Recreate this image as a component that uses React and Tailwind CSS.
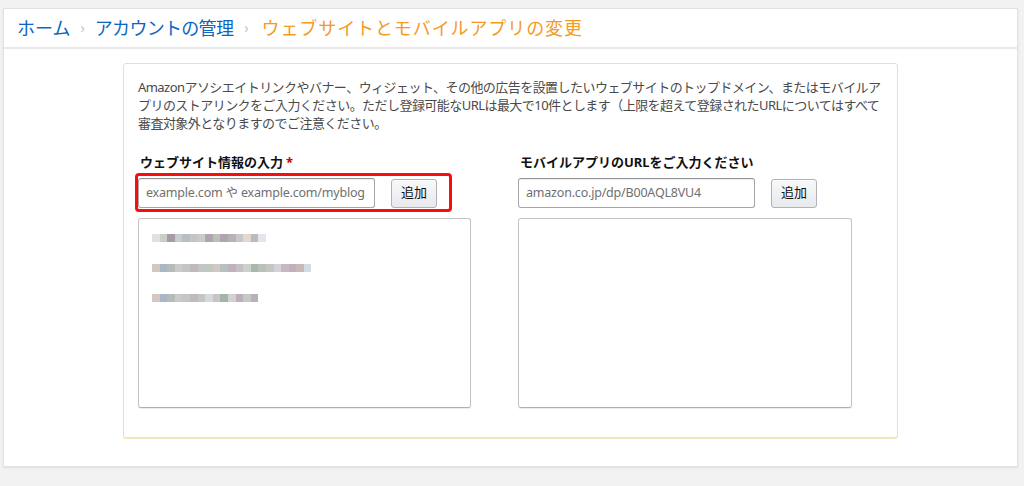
import React from 'react';

const jp = { fontFamily: '"Noto Sans", "Noto Sans CJK JP", sans-serif' };

const blurRows = [
  ['#dfe3df', '#c7cfc7', '#a89aa8', '#c8cbd0', '#b5c0c0', '#c3c6c3', '#c9cdca', '#b2a3b2', '#b9c2b9', '#aea5ae', '#b8b2b8', '#c7c9c7', '#e6d6cc', '#b8bcc0', '#e2e6ea'],
  ['#d4c6c0', '#a9b6c4', '#b5bdb8', '#c8cbc8', '#c3c6c3', '#c2b8be', '#c3c7c3', '#c6c6c0', '#d2c8c4', '#b9c0c2', '#bfb2bc', '#c4c0c4', '#cdd0cd', '#aab8ac', '#b8c2b8', '#c4c7c4', '#d2d2dc', '#c6b8c0', '#c0b0b8', '#c9b8b8', '#d2dce2'],
  ['#d4c6c0', '#a9b6c4', '#b5bdb8', '#c8cbc8', '#c3c6c3', '#c2b8be', '#c3c7c3', '#d8d8d8', '#c6c6c6', '#a2b4a6', '#d2d2d2', '#bcb0bc', '#c5c8c5', '#b8b0c0'],
];

function BlurLine({ colors }) {
  return (
    <div className="flex h-[8px] blur-[0.5px]">
      {colors.map((c, i) => (
        <div key={i} className="h-full w-[7.6px]" style={{ backgroundColor: c }} />
      ))}
    </div>
  );
}

function AddButton() {
  return (
    <button className="ml-[16px] h-[29px] w-[46px] rounded-[3px] border border-[#adb1b8] bg-gradient-to-b from-[#f7f8fa] to-[#e7e9ec] text-[13px] text-[#111] shadow-[0_1px_0_rgba(255,255,255,0.6)_inset]">
      追加
    </button>
  );
}

function UrlInput({ placeholder }) {
  return (
    <div className="flex h-[30px] w-[237px] items-center overflow-hidden whitespace-nowrap rounded-[3px] border border-[#a6a6a6] border-t-[#949494] bg-white px-[7px] text-[12.5px] tracking-[-0.2px] text-[#6f6f6f] shadow-[0_1px_0_rgba(0,0,0,0.07)_inset]">
      {placeholder}
    </div>
  );
}

export default function App() {
  return (
    <div className="min-h-[486px] bg-[#f2f2f2] pt-[8px] pl-[3px] pr-[6px]" style={jp}>
      <div className="h-[459px] border border-[#e2e2e2] bg-white shadow-[0_1px_2px_rgba(0,0,0,0.08)]">
        <div className="flex h-[40px] items-center border-b-2 border-[#e9e9e9] pl-[13px] text-[18px] leading-none">
          <span className="text-[#0b66c0]">ホーム</span>
          <span className="mx-[10px] text-[14px] text-[#c2c2c2]">›</span>
          <span className="tracking-[-0.7px] text-[#0b66c0]">アカウントの管理</span>
          <span className="ml-[11px] mr-[13px] text-[14px] text-[#c2c2c2]">›</span>
          <span className="tracking-[0.9px] text-[#f39b1f]">ウェブサイトとモバイルアプリの変更</span>
        </div>

        <div className="pt-[14px] pl-[119px]">
          <div className="relative h-[375px] w-[775px] rounded-[3px] border border-[#f8dcaa] pt-[14px] pl-[14px] shadow-[0_1px_0_#fbe6c2]">
            <p className="whitespace-nowrap text-[13px] leading-[18px] tracking-[-0.55px] text-[#4a4a4a]">
              Amazonアソシエイトリンクやバナー、ウィジェット、その他の広告を設置したいウェブサイトのトップドメイン、またはモバイルア
              <br />
              プリのストアリンクをご入力ください。ただし登録可能なURLは最大で10件とします（上限を超えて登録されたURLについてはすべて
              <br />
              審査対象外となりますのでご注意ください。
            </p>

            <div className="mt-[21px] flex gap-[47px]">
              <div className="w-[333px]">
                <div className="h-[18px] pl-[2px] text-[13px] font-bold leading-[18px] text-[#111]">
                  ウェブサイト情報の入力<span className="ml-[3px] text-[#c40000]">*</span>
                </div>
                <div className="relative mt-[7px] flex items-center">
                  <UrlInput placeholder="example.com や example.com/myblog" />
                  <AddButton />
                  <div className="pointer-events-none absolute left-[-3px] top-[-5px] h-[39px] w-[317px] rounded-[4px] border-[3px] border-[#f60d0d]" />
                </div>
                <div className="mt-[10px] h-[190px] rounded-[3px] border border-[#c4c4c4] border-b-[#b0b0b0] pt-[15px] pl-[13px] shadow-[0_1px_1px_rgba(0,0,0,0.08)]">
                  <div className="flex flex-col gap-[22px]">
                    {blurRows.map((r, i) => (
                      <BlurLine key={i} colors={r} />
                    ))}
                  </div>
                </div>
              </div>

              <div className="w-[334px]">
                <div className="h-[18px] pl-[2px] text-[13px] font-bold leading-[18px] text-[#111]">
                  モバイルアプリのURLをご入力ください
                </div>
                <div className="mt-[7px] flex items-center">
                  <UrlInput placeholder="amazon.co.jp/dp/B00AQL8VU4" />
                  <AddButton />
                </div>
                <div className="mt-[10px] h-[190px] rounded-[3px] border border-[#c4c4c4] border-b-[#b0b0b0] shadow-[0_1px_1px_rgba(0,0,0,0.08)]" />
              </div>
            </div>
          </div>
        </div>
      </div>
    </div>
  );
}
